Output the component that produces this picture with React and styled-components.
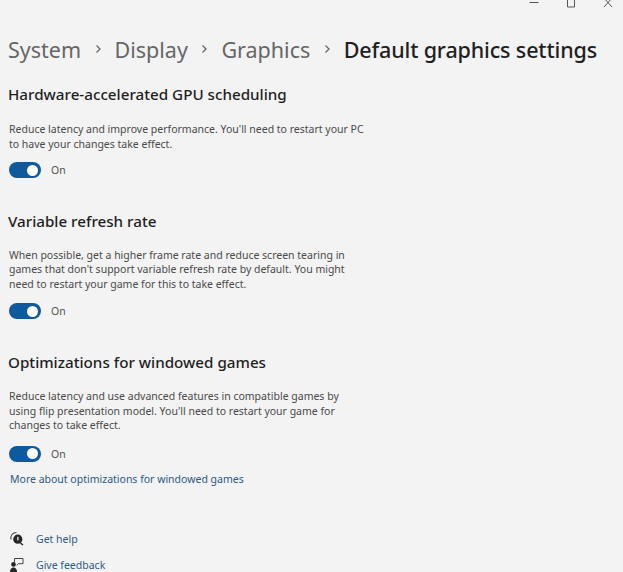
import React from "react";
import styled, { createGlobalStyle } from "styled-components";

const GlobalStyle = createGlobalStyle`
  html, body {
    margin: 0;
    padding: 0;
    height: 100%;
    overflow: hidden;
    background: #f3f3f3;
  }
`;

const Page = styled.div`
  width: 623px;
  height: 572px;
  overflow: hidden;
  background: #f3f3f3;
  color: #1b1b1b;
  font-family: "Noto Sans", "Open Sans", sans-serif;
`;

const TitleBar = styled.div`
  display: flex;
  justify-content: flex-end;
  align-items: flex-start;
  gap: 27px;
  height: 8px;
  padding-right: 10px;
  overflow: hidden;
`;

const Breadcrumb = styled.div`
  display: flex;
  align-items: center;
  height: 30px;
  margin-top: 26px;
  padding-left: 8px;
  font-size: 21.5px;
  white-space: nowrap;
`;

const Crumb = styled.span`
  color: ${(p) => (p.$current ? "#1f1f1f" : "#666666")};
  font-weight: ${(p) => (p.$current ? 500 : 400)};
  letter-spacing: ${(p) => (p.$current ? "-0.15px" : "0")};
`;

const Chevron = styled.svg`
  width: 8px;
  height: 10px;
  margin: 0 13px 0 12.5px;
  flex: none;
`;

const Section = styled.section`
  padding-left: 8px;
  margin-top: ${(p) => p.$top}px;
`;

const Heading = styled.h2`
  margin: 0;
  font-size: 15.2px;
  line-height: 20px;
  font-weight: 500;
  color: #1f1f1f;
`;

const Description = styled.p`
  margin: ${(p) => p.$top || 18}px 0 0 1px;
  font-size: 10.5px;
  line-height: 14.5px;
  color: #4a4a4a;
  white-space: nowrap;
`;

const ToggleRow = styled.div`
  display: flex;
  align-items: center;
  gap: 10px;
  margin: ${(p) => p.$top}px 0 0 1px;
  height: 16px;
`;

const Track = styled.div`
  display: flex;
  align-items: center;
  justify-content: flex-end;
  width: 32px;
  height: 16px;
  padding-right: 3px;
  box-sizing: border-box;
  border-radius: 8px;
  background: #0f5a9c;
`;

const Knob = styled.div`
  width: 11px;
  height: 11px;
  border-radius: 50%;
  background: #ffffff;
`;

const ToggleLabel = styled.span`
  font-size: 10.5px;
  color: #555555;
`;

const MoreLink = styled.a`
  display: block;
  margin: 10px 0 0 2px;
  font-size: 10.5px;
  line-height: 14px;
  color: #2c5a85;
`;

const Footer = styled.div`
  display: flex;
  flex-direction: column;
  gap: 12px;
  margin-top: 46px;
  padding-left: 9px;
`;

const FooterRow = styled.div`
  display: flex;
  align-items: center;
  gap: 12px;
  height: 14px;
`;

const FooterLink = styled.a`
  font-size: 10.5px;
  color: #2f5d86;
`;

const WindowIcon = styled.svg`
  width: 10px;
  height: 10px;
  flex: none;
`;

const FooterIcon = styled.svg`
  width: 15px;
  height: 15px;
  flex: none;
`;

const ChevronMark = () => (
  <Chevron viewBox="0 0 8 10">
    <path d="M2.5 1.5 6 5 2.5 8.5" fill="none" stroke="#666" strokeWidth="1.3" />
  </Chevron>
);

const Toggle = ({ top = 11 }) => (
  <ToggleRow $top={top}>
    <Track>
      <Knob />
    </Track>
    <ToggleLabel>On</ToggleLabel>
  </ToggleRow>
);

const HelpIcon = () => (
  <FooterIcon viewBox="0 0 15 15">
    <circle cx="8.8" cy="8.2" r="4.6" fill="#262626" />
    <path d="M2 8.5C1.2 4.5 3.5 1.5 7.5 1.5" fill="none" stroke="#444" strokeWidth="1.1" />
    <path d="M11.5 12 14 14" stroke="#262626" strokeWidth="1.5" />
    <rect x="8.2" y="5.8" width="1.3" height="3.6" fill="#eee" />
  </FooterIcon>
);

const FeedbackIcon = () => (
  <FooterIcon viewBox="0 0 15 15">
    <circle cx="4.5" cy="7.4" r="2.3" fill="#262626" />
    <path d="M1 15c0-3 1.5-4.6 3.5-4.6S8 12 8 15z" fill="#262626" />
    <path d="M5.5 5V1.5h8.5v5.2H9.3L7.8 8.3" fill="none" stroke="#444" strokeWidth="1" />
  </FooterIcon>
);

const App = () => (
  <Page>
    <GlobalStyle />
    <TitleBar>
      <WindowIcon viewBox="0 0 10 10">
        <path d="M0.5 2.5h9" stroke="#555" strokeWidth="1" />
      </WindowIcon>
      <WindowIcon viewBox="0 0 10 10">
        <path d="M1.5-3h7v10h-7z" fill="none" stroke="#555" strokeWidth="1" />
      </WindowIcon>
      <WindowIcon viewBox="0 0 10 10">
        <path d="M1-2 9 7M9-2 1 7" fill="none" stroke="#555" strokeWidth="1" />
      </WindowIcon>
    </TitleBar>

    <Breadcrumb>
      <Crumb>System</Crumb>
      <ChevronMark />
      <Crumb>Display</Crumb>
      <ChevronMark />
      <Crumb>Graphics</Crumb>
      <ChevronMark />
      <Crumb $current>Default graphics settings</Crumb>
    </Breadcrumb>

    <Section $top={20}>
      <Heading>Hardware-accelerated GPU scheduling</Heading>
      <Description>
        Reduce latency and improve performance. You'll need to restart your PC
        <br />
        to have your changes take effect.
      </Description>
      <Toggle />
    </Section>

    <Section $top={32.5}>
      <Heading>Variable refresh rate</Heading>
      <Description $top={17}>
        When possible, get a higher frame rate and reduce screen tearing in
        <br />
        games that don't support variable refresh rate by default. You might
        <br />
        need to restart your game for this to take effect.
      </Description>
      <Toggle top={12} />
    </Section>

    <Section $top={33}>
      <Heading>Optimizations for windowed games</Heading>
      <Description $top={17}>
        Reduce latency and use advanced features in compatible games by
        <br />
        using flip presentation model. You'll need to restart your game for
        <br />
        changes to take effect.
      </Description>
      <Toggle top={13} />
      <MoreLink>More about optimizations for windowed games</MoreLink>
    </Section>

    <Footer>
      <FooterRow>
        <HelpIcon />
        <FooterLink>Get help</FooterLink>
      </FooterRow>
      <FooterRow>
        <FeedbackIcon />
        <FooterLink>Give feedback</FooterLink>
      </FooterRow>
    </Footer>
  </Page>
);

export default App;
